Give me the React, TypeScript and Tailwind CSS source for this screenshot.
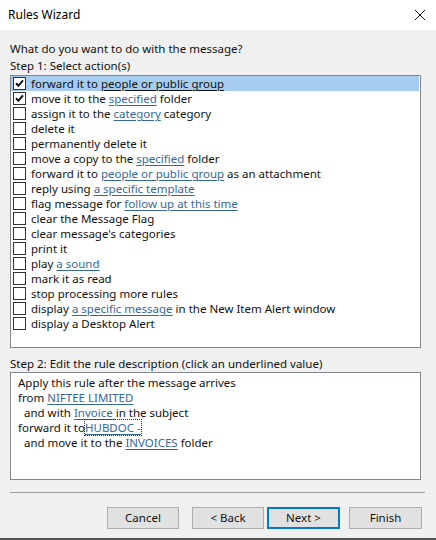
import React from "react";

type Part = { text: string; link?: boolean };

interface Action {
  id: number;
  parts: Part[];
  checked?: boolean;
}

const actions: Action[] = [
  { id: 1, checked: true, parts: [{ text: "forward it to " }, { text: "people or public group", link: true }] },
  { id: 2, checked: true, parts: [{ text: "move it to the " }, { text: "specified", link: true }, { text: " folder" }] },
  { id: 3, parts: [{ text: "assign it to the " }, { text: "category", link: true }, { text: " category" }] },
  { id: 4, parts: [{ text: "delete it" }] },
  { id: 5, parts: [{ text: "permanently delete it" }] },
  { id: 6, parts: [{ text: "move a copy to the " }, { text: "specified", link: true }, { text: " folder" }] },
  { id: 7, parts: [{ text: "forward it to " }, { text: "people or public group", link: true }, { text: " as an attachment" }] },
  { id: 8, parts: [{ text: "reply using " }, { text: "a specific template", link: true }] },
  { id: 9, parts: [{ text: "flag message for " }, { text: "follow up at this time", link: true }] },
  { id: 10, parts: [{ text: "clear the Message Flag" }] },
  { id: 11, parts: [{ text: "clear message's categories" }] },
  { id: 12, parts: [{ text: "print it" }] },
  { id: 13, parts: [{ text: "play " }, { text: "a sound", link: true }] },
  { id: 14, parts: [{ text: "mark it as read" }] },
  { id: 15, parts: [{ text: "stop processing more rules" }] },
  { id: 16, parts: [{ text: "display " }, { text: "a specific message", link: true }, { text: " in the New Item Alert window" }] },
  { id: 17, parts: [{ text: "display a Desktop Alert" }] },
];

const Link: React.FC<{ children: React.ReactNode; dotted?: boolean }> = ({ children, dotted }) => (
  <span
    className={
      "text-[#36679a] underline underline-offset-2 decoration-[#36679a]" +
      (dotted ? " outline outline-1 outline-dotted outline-[#333]" : "")
    }
  >
    {children}
  </span>
);

const CheckBox: React.FC<{ checked?: boolean }> = ({ checked }) => (
  <span className="w-[13px] h-[13px] border border-[#333] bg-white flex items-center justify-center shrink-0">
    {checked && (
      <svg width="9" height="9" viewBox="0 0 9 9">
        <path d="M1 4.3 L3.4 6.8 L8 1.4" stroke="#111" strokeWidth="2" fill="none" />
      </svg>
    )}
  </span>
);

const Button: React.FC<{ label: string; primary?: boolean; className?: string }> = ({ label, primary, className }) => (
  <button
    className={
      "h-[22px] bg-[#e1e1e1] text-[11.5px] text-[#111] flex items-center justify-center " +
      (primary ? "border-2 border-[#0078d7] " : "border border-[#adadad] ") +
      (className ?? "")
    }
  >
    {label}
  </button>
);

export default function App() {
  return (
    <div
      className="w-[436px] h-[540px] bg-[#f0f0f0] text-[11.5px] text-[#111] flex flex-col border-b-2 border-[#555]"
      style={{ fontFamily: '"Noto Sans", "Open Sans", sans-serif' }}
    >
      {/* Title bar */}
      <div className="h-[30px] bg-white flex items-center justify-between pl-[8px] pr-[8px] shrink-0">
        <span className="text-[12px] text-black">Rules Wizard</span>
        <svg width="12" height="12" viewBox="0 0 12 12" className="mr-[2px]">
          <path d="M1 1 L11 11 M11 1 L1 11" stroke="#111" strokeWidth="1" />
        </svg>
      </div>

      <div className="flex flex-col px-[10px] pt-[10px]">
        <div className="h-[17px] leading-[17px]">What do you want to do with the message?</div>
        <div className="h-[17px] leading-[17px]">Step 1: Select action(s)</div>

        {/* Action list */}
        <div className="mt-[1px] w-[411px] h-[273px] bg-white border border-[#828790] flex flex-col">
          {actions.map((a) => (
            <div
              key={a.id}
              className={
                "h-[15px] flex items-center gap-[5px] pl-[2px] whitespace-nowrap leading-[15px] " +
                (a.id === 1 ? "bg-[#a6cdf0] mr-[1px]" : "")
              }
            >
              <CheckBox checked={a.checked} />
              <span>
                {a.parts.map((p, i) =>
                  p.link ? (
                    <span
                      key={i}
                      className={
                        a.id === 1
                          ? "text-[#111] underline underline-offset-2"
                          : "text-[#36679a] underline underline-offset-2"
                      }
                    >
                      {p.text}
                    </span>
                  ) : (
                    <span key={i}>{p.text}</span>
                  )
                )}
              </span>
            </div>
          ))}
        </div>

        <div className="mt-[7px] h-[17px] leading-[17px]">
          Step 2: Edit the rule description (click an underlined value)
        </div>

        {/* Rule description */}
        <div className="w-[411px] h-[108px] bg-white border border-[#828790] pt-[2px] pl-[7px] flex flex-col leading-[15px]">
          <div>Apply this rule after the message arrives</div>
          <div>
            from <Link>NIFTEE LIMITED</Link>
          </div>
          <div className="pl-[6px]">
            and with <Link>Invoice </Link> in the subject
          </div>
          <div>
            forward it to<Link dotted>HUBDOC -</Link>
          </div>
          <div className="pl-[6px]">
            and move it to the <Link>INVOICES</Link> folder
          </div>
        </div>

        <div className="mt-[12px] h-px bg-[#a0a0a0] w-[415px]" />

        <div className="mt-[14px] flex">
          <Button label="Cancel" className="ml-[97px] w-[72px]" />
          <Button label="< Back" className="ml-[13px] w-[72px]" />
          <Button label="Next >" primary className="ml-[3px] w-[73px]" />
          <Button label="Finish" className="ml-[9px] w-[73px]" />
        </div>
      </div>
    </div>
  );
}
